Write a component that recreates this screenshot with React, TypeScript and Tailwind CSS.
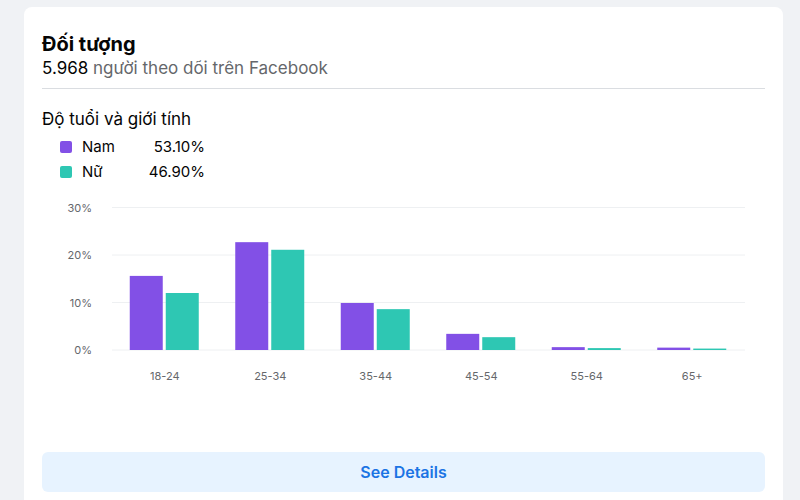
export default function App() {
  const data = [
    ["18-24", 15.6, 12.0],
    ["25-34", 22.7, 21.1],
    ["35-44", 9.9, 8.6],
    ["45-54", 3.4, 2.7],
    ["55-64", 0.6, 0.4],
    ["65+", 0.5, 0.3],
  ] as const;
  const ox = 42, oy = 200;
  const base = 357 - oy;
  const gw = (745 - 112) / 6;
  return (
    <div className="w-[800px] h-[500px] bg-[#f0f2f5] pl-[24px] pr-[17px] pt-[7px] overflow-hidden" style={{ fontFamily: "Inter, 'Noto Sans', sans-serif" }}>
      <div className="bg-white rounded-t-[8px] h-[493px] px-[18px] pt-[24px] flex flex-col">
        <div className="text-[20px] font-bold text-[#050505] leading-[26px]">Đối tượng</div>
        <div className="text-[17px] leading-[22px] text-[#65676b]"><span className="text-[#050505]">5.968</span> người theo dõi trên Facebook</div>
        <div className="h-px bg-[#dadde1] mt-[9px]" />
        <div className="text-[17px] leading-[22px] text-[#050505] mt-[19px]">Độ tuổi và giới tính</div>
        <div className="mt-[6px] pl-[18px] flex flex-col gap-[3px] text-[15px] text-[#050505]">
          <div className="flex items-center h-[22px]"><span className="w-[12px] h-[12px] rounded-[2px] bg-[#8250e6]" /><span className="ml-[10px] w-[60px]">Nam</span><span className="w-[63px] text-right">53.10%</span></div>
          <div className="flex items-center h-[22px]"><span className="w-[12px] h-[12px] rounded-[2px] bg-[#2ec7b3]" /><span className="ml-[10px] w-[60px]">Nữ</span><span className="w-[63px] text-right">46.90%</span></div>
        </div>
        <svg width="723" height="195" className="mt-[10px]" style={{ fontFamily: "Inter, 'Noto Sans', sans-serif" }}>
          {[0, 10, 20, 30].map((v) => {
            const y = base - v * 4.75;
            return (
              <g key={v}>
                <line x1={112 - ox} x2={745 - ox} y1={y} y2={y} stroke="#eef0f2" strokeWidth="1" />
                <text x={92 - ox} y={y + 4} textAnchor="end" fontSize="11" fill="#65676b">{v}%</text>
              </g>
            );
          })}
          {data.map(([l, m, f], i) => {
            const gx = 112 - ox + gw * i;
            const c = gx + gw / 2;
            return (
              <g key={l}>
                <rect x={c - 35} y={base - m * 4.75} width={33} height={m * 4.75} fill="#8250e6" />
                <rect x={c + 1} y={base - f * 4.75} width={33} height={f * 4.75} fill="#2ec7b3" />
                <text x={c} y={base + 30} textAnchor="middle" fontSize="11" fill="#65676b">{l}</text>
              </g>
            );
          })}
        </svg>
        <div className="mt-[64px] h-[40px] rounded-[6px] bg-[#e7f3ff] flex items-center justify-center text-[16px] font-semibold text-[#1b74e4]">See Details</div>
      </div>
    </div>
  );
}
